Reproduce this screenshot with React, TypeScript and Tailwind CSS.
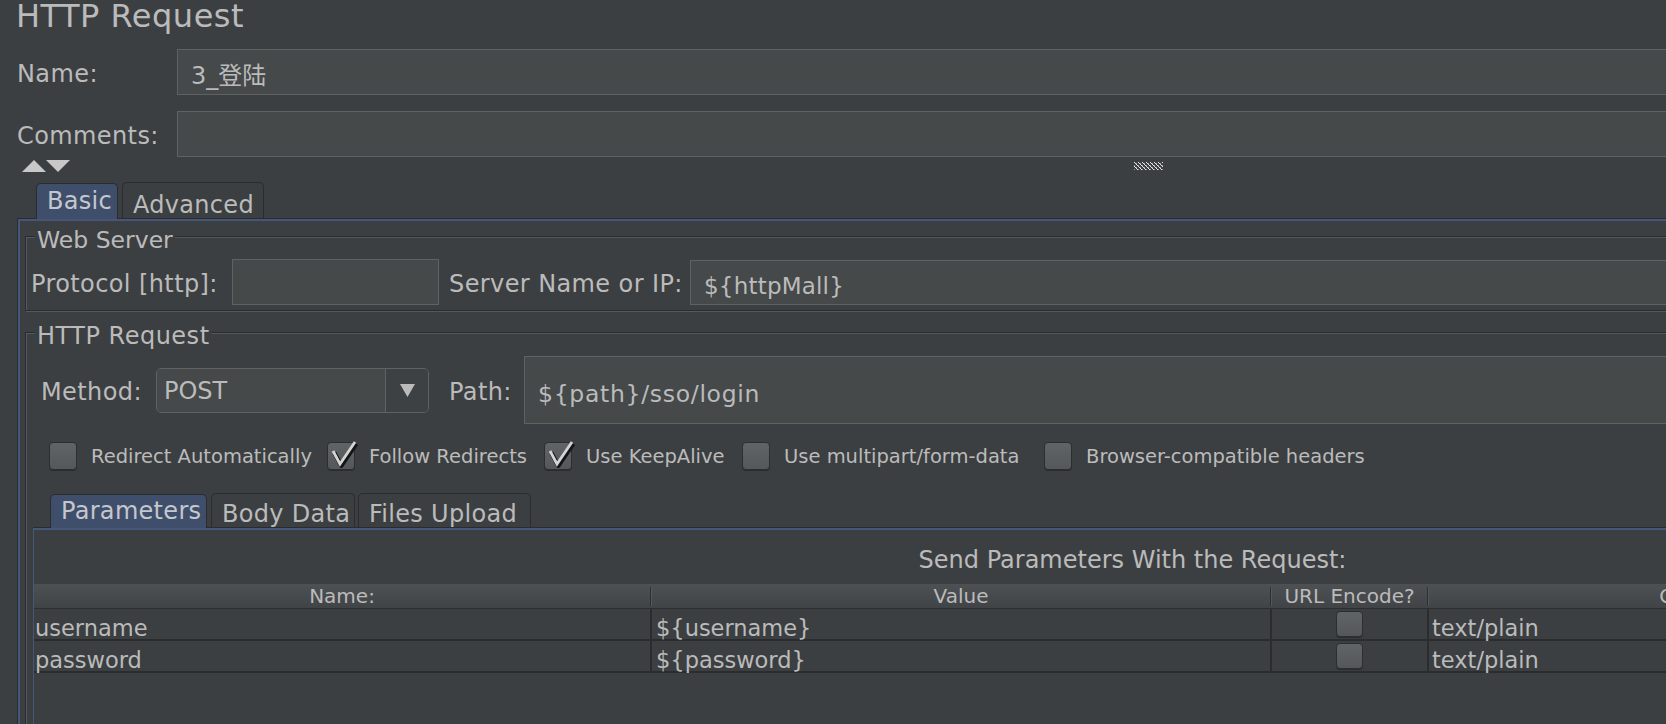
import React from 'react';

// JMeter "HTTP Request" sampler, Darcula look

const Field = ({ value, className = '' }: { value?: string; className?: string }) => (
  <div
    className={`flex items-center bg-[#45494a] border border-[#5f6264] leading-[24px] text-[#bbbbbb] whitespace-nowrap ${className}`}
  >
    <span className="pt-[7px]">{value}</span>
  </div>
);

const Label = ({ text, className = '' }: { text: string; className?: string }) => (
  <div className={`shrink-0 text-[24px] tracking-[0.4px] leading-[24px] pt-[4px] whitespace-nowrap ${className}`}>{text}</div>
);

const Check = ({ checked = false, small = false }: { checked?: boolean; small?: boolean }) => (
  <div
    className={`relative shrink-0 rounded-[4px] border border-[#2c2e30] bg-[linear-gradient(#616466,#55585a)] shadow-[0_1px_0_#2a2c2e] ${
      small ? 'w-[27px] h-[26px]' : 'w-[28px] h-[28px]'
    }`}
  >
    {checked && (
      <svg className="absolute left-0 top-0 overflow-visible" width="28" height="28" viewBox="0 0 28 28">
        <path d="M5 8 L12 21 L27 -1" fill="none" stroke="#141516" strokeWidth="4.4" strokeLinejoin="round" transform="translate(1.3,1.8)" />
        <path d="M5 8 L12 21 L27 -1" fill="none" stroke="#d4d4d4" strokeWidth="2.8" />
      </svg>
    )}
  </div>
);

const CheckItem = ({ label, checked, w }: { label: string; checked?: boolean; w: string }) => (
  <div className="flex items-center">
    <Check checked={checked} />
    <div className={`ml-[14px] text-[19.5px] leading-[22px] pt-[2px] whitespace-nowrap ${w}`}>{label}</div>
  </div>
);

const Tab = ({ label, selected, w, tall }: { label: string; selected?: boolean; w: string; tall?: boolean }) => (
  <div
    className={`${w} h-full shrink-0 rounded-t-[5px] border border-b-0 border-[#2a2c2e] pl-[10px] text-[24px] tracking-[0.3px] whitespace-nowrap ${
      tall ? 'leading-[34px]' : 'leading-[33px]'
    } ${selected ? 'bg-[#3f4e6b] text-[#c4c7cd] relative z-10 -mb-[1px]' : tall ? 'bg-[#3c3f41] pt-[5px]' : 'bg-[#3c3f41] pt-[4px]'}`}
  >
    {label}
  </div>
);

const Grip = () => {
  const dots: React.ReactElement[] = [];
  for (let y = 0; y < 8; y++) {
    for (let x = 0; x < 29; x++) {
      const k = (x - y + 32) % 4;
      if (k === 0) dots.push(<rect key={`${x}-${y}`} x={x} y={y} width="1" height="1" fill="#e6e6e6" />);
      else if (k === 1 && y % 2 === 1) dots.push(<rect key={`${x}-${y}`} x={x} y={y} width="1" height="1" fill="#9a9a9a" />);
    }
  }
  return (
    <svg width="29" height="8" viewBox="0 0 29 8" className="ml-[1064px] mt-[5px]">
      {dots}
    </svg>
  );
};

const HeaderCell = ({ text, w, last }: { text: string; w: string; last?: boolean }) => (
  <div className={`${w} h-full flex items-center`}>
    <div className="flex-1 text-center text-[20px] leading-[26px] whitespace-nowrap">{text}</div>
    {!last && <div className="w-[2px] h-[19px] border-l border-[#2c2e30] bg-[#55585b]" />}
  </div>
);

const Row = ({ name, value }: { name: string; value: string }) => (
  <div className="flex h-[32px] border-b-2 border-[#2a2c2e] text-[22.5px] leading-[30px] whitespace-nowrap">
    <div className="w-[618px] border-r-2 border-[#2a2c2e] pl-[1px] pt-[4px]">{name}</div>
    <div className="w-[620px] border-r-2 border-[#2a2c2e] pl-[4px] pt-[4px]">{value}</div>
    <div className="w-[157px] border-r-2 border-[#2a2c2e] flex justify-center pt-[2px]">
      <Check small />
    </div>
    <div className="w-[600px] border-r-2 border-[#2a2c2e] pl-[3px] pt-[4px]">text/plain</div>
    <div className="flex-1" />
  </div>
);

export default function App() {
  return (
    <div className="w-[1666px] h-[724px] overflow-hidden bg-[#3c3f41] text-[#bbbbbb] font-['DejaVu_Sans','Noto_Sans_CJK_SC',sans-serif]">
      <div className="w-[2268px]">
        <div className="pl-[16px] pt-[1px] h-[30px] text-[32px] tracking-[0.5px] leading-[30px]">HTTP Request</div>

        {/* Name / Comments */}
        <div className="flex items-center mt-[19px] h-[46px] pr-[12px]">
          <Label text="Name:" className="w-[177px] pl-[17px]" />
          <Field className="flex-1 h-[46px] pl-[13px] text-[24px]" value="3_登陆" />
        </div>
        <div className="flex items-center mt-[16px] h-[46px] pr-[12px]">
          <Label text="Comments:" className="w-[177px] pl-[17px]" />
          <Field className="flex-1 h-[46px]" />
        </div>

        {/* splitter arrows + grip */}
        <div className="flex items-start h-[25px]">
          <svg width="48" height="12" viewBox="0 0 48 12" className="ml-[22px] mt-[3px]">
            <polygon points="0,12 12,0 24,12" fill="#c8c8c8" />
            <polygon points="24,0 48,0 36,12" fill="#c8c8c8" />
          </svg>
          <Grip />
        </div>

        {/* Basic / Advanced tabs */}
        <div className="flex items-end h-[36px] pl-[36px] gap-[4px]">
          <Tab label="Basic" selected w="w-[82px]" tall />
          <Tab label="Advanced" w="w-[142px]" tall />
        </div>

        <div className="mx-[17px] border-t border-l border-[#2a2c2e]">
          <div className="border-t-2 border-l-2 border-[#46567a] h-[560px] pr-[5px]">
            {/* Web Server */}
            <div className="relative mt-[15px] ml-[5px] h-[75px] border border-[#2a2c2e] shadow-[inset_1px_1px_0_#56595b,1px_1px_0_#56595b]">
              <div className="absolute left-[9px] -top-[9px] px-[2px] bg-[#3c3f41] text-[23.5px] leading-[24px]">Web Server</div>
              <div className="flex items-center h-[46px] mt-[22px] pl-[5px] pr-[6px]">
                <Label text="Protocol [http]:" className="w-[201px]" />
                <Field className="w-[207px] h-[46px]" />
                <Label text="Server Name or IP:" className="ml-[10px] w-[241px] tracking-[0.2px]" />
                <Field className="flex-1 h-[45px] pl-[13px] text-[23px] tracking-[0.2px]" value="${httpMall}" />
              </div>
            </div>

            {/* HTTP Request */}
            <div className="relative mt-[21px] ml-[5px] h-[470px] border border-[#2a2c2e] shadow-[inset_1px_1px_0_#56595b,1px_1px_0_#56595b]">
              <div className="absolute left-[9px] -top-[9px] px-[2px] bg-[#3c3f41] text-[24px] tracking-[0.5px] leading-[24px]">
                HTTP Request
              </div>

              <div className="flex items-center h-[68px] mt-[23px] pl-[15px] pr-[6px]">
                <Label text="Method:" className="w-[115px]" />
                <div className="flex w-[273px] h-[45px] rounded-[5px] border border-[#5f6264] overflow-hidden">
                  <div className="flex-1 flex items-center bg-[#45494a] pl-[7px] text-[24px] leading-[24px]">
                    <span className="pt-[2px]">POST</span>
                  </div>
                  <div className="w-[43px] border-l border-[#5f6264] bg-[#3e4143] flex items-center justify-center">
                    <svg width="15" height="13" viewBox="0 0 15 13">
                      <polygon points="0,0 15,0 7.5,13" fill="#bbbbbb" />
                    </svg>
                  </div>
                </div>
                <Label text="Path:" className="ml-[20px] w-[75px]" />
                <Field className="flex-1 h-[68px] pl-[13px] text-[23.5px] tracking-[0.7px]" value="${path}/sso/login" />
              </div>

              <div className="flex items-center h-[28px] mt-[18px] pl-[23px]">
                <CheckItem label="Redirect Automatically" w="w-[236px]" />
                <CheckItem label="Follow Redirects" checked w="w-[175px]" />
                <CheckItem label="Use KeepAlive" checked w="w-[156px]" />
                <CheckItem label="Use multipart/form-data" w="w-[260px]" />
                <CheckItem label="Browser-compatible headers" w="w-[300px]" />
              </div>

              {/* Parameters / Body Data / Files Upload */}
              <div className="flex items-end h-[34px] mt-[23px] pl-[24px]">
                <Tab label="Parameters" selected w="w-[157px]" />
                <div className="w-[4px]" />
                <Tab label="Body Data" w="w-[144px]" />
                <div className="w-[3px]" />
                <Tab label="Files Upload" w="w-[173px]" />
              </div>

              <div className="ml-[7px] w-[2198px] border-t border-[#2a2c2e]">
                <div className="border-t-2 border-l border-[#46567a] h-[300px]">
                  <div className="mt-[16px] text-center text-[24px] leading-[28px]">Send Parameters With the Request:</div>

                  <div className="mt-[10px] flex h-[25px] border-b border-[#2c2e30] bg-[linear-gradient(#4e5154,#414446)]">
                    <HeaderCell text="Name:" w="w-[618px]" />
                    <HeaderCell text="Value" w="w-[620px]" />
                    <HeaderCell text="URL Encode?" w="w-[157px]" />
                    <HeaderCell text="Content-Type:" w="w-[600px]" />
                    <HeaderCell text="Include Equals?" w="flex-1" last />
                  </div>
                  <Row name="username" value="${username}" />
                  <Row name="password" value="${password}" />
                </div>
              </div>
            </div>
          </div>
        </div>
      </div>
    </div>
  );
}
